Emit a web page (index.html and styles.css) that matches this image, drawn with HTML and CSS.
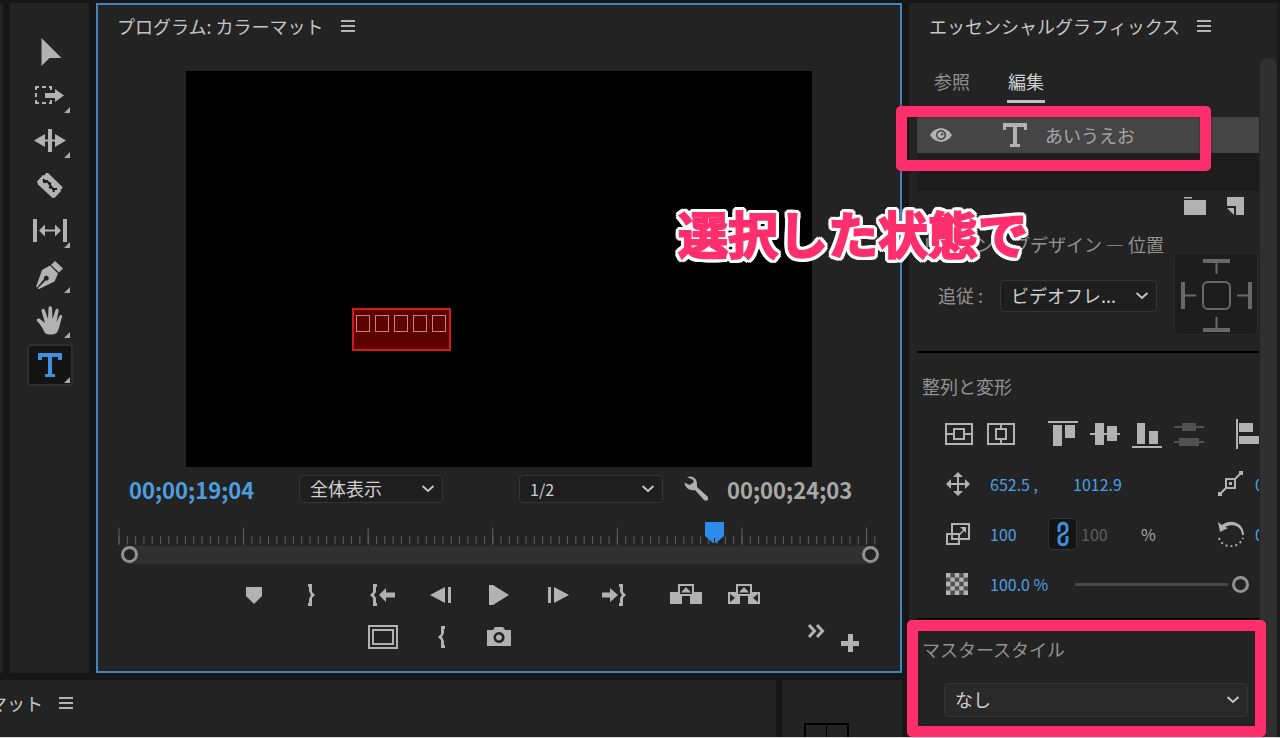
FILE: index.html
```html
<!DOCTYPE html>
<html lang="ja">
<head>
<meta charset="utf-8">
<title>プログラム: カラーマット</title>
<link rel="stylesheet" href="styles.css">
</head>
<body>
<div class="app">
  <div class="main">
    <div class="upper">
      <div class="edge-panel"></div>
      <nav class="tools" aria-label="ツール">
        <button class="tool" aria-label="選択"><svg width="34" height="32" viewBox="0 0 34 32"><path d="M8.500 4v28l8-8H28.500z"/></svg></button>
        <button class="tool has-more" aria-label="トラックの前方選択"><svg width="34" height="32" viewBox="0 0 34 32"><path d="M12 14h10v-4l9 6.500-9 6.500v-4H12z"/><path class="ln2" d="M3 11V8h3M9 8h4M16 8h2v3M3 14v4M3 21v3h3M9 24h4M16 24h2v-3"/></svg></button>
        <button class="tool has-more" aria-label="リップル"><svg width="34" height="32" viewBox="0 0 34 32"><path d="M15 5h4v23h-4zM1 16.500l11-6.500v5.500h3v2h-3V23zM33 16.500L22 10v5.500h-3v2h3V23z"/></svg></button>
        <button class="tool" aria-label="レーザー"><svg width="34" height="32" viewBox="0 0 34 32"><path d="M4 12.500l6-6.500 1.500.500L13 4l2 0L29.500 18l-.5 2-1.500 0 .5 2-6 6.500-2.500.500L5 15.500z"/><path class="slot" d="M10 10l3 4M10 13l4-1 6 8M16 15l2-1M16 18l2 1M20 20l4 0M20 20l1 3"/></svg></button>
        <button class="tool has-more" aria-label="スリップ"><svg width="34" height="32" viewBox="0 0 34 32"><path d="M0 5h4v23H0zM30 5h4v23h-4zM6 16.500l6-6v5h10v-5l6 6-6 6v-5H12v5z"/></svg></button>
        <button class="tool has-more" aria-label="ペン"><svg width="34" height="32" viewBox="0 0 34 32"><path d="M18 6l4-4 8 7.500-4 4zM3 28l6-17 8-4.500 8 8-3.500 8L6 30l-1.500-.500 8-8a2.500 2.500 0 1 0-1.500-1.500L4 28.500z"/></svg></button>
        <button class="tool has-more" aria-label="手のひら"><svg width="34" height="32" viewBox="0 0 34 32"><path d="M12 29C9 23 7 20 4 17c-1-2 1-3 3-2l5 4L8.500 7c0-3 3-3 3.500-.500L15 15l.5-11c.5-2.500 3-2.500 3.500 0l.5 11 3-9c1-2 3.500-1.500 3 1l-2 11 3-6c1-2 3.500-1 2.500 1-2 6-2.500 12-5.500 16-3 2-9 2-11.500 0z"/></svg></button>
        <button class="tool has-more selected" aria-label="横書き文字"><svg width="34" height="32" viewBox="0 0 34 32"><path d="M5 4h24v7h-4V8h-6v17h3v3h-10v-3h3V8H9v3H5z"/></svg></button>
      </nav>
      <section class="program">
        <header class="panel-head"><h1 class="title">プログラム: カラーマット</h1><button class="menu" aria-label="パネルメニュー"></button></header>
        <div class="monitor">
          <div class="text-layer"><i></i><i></i><i></i><i></i><i></i></div>
        </div>
        <div class="monitor-bar">
          <span class="time now">00;00;19;04</span>
          <span class="select fit"><select aria-label="ズーム"><option>全体表示</option></select><svg class="chev" width="14" height="8"><path d="M1.500 1l5.500 5 5.500-5"/></svg></span>
          <span class="select res"><select aria-label="再生時の解像度"><option>1/2</option></select><svg class="chev" width="14" height="8"><path d="M1.500 1l5.500 5 5.500-5"/></svg></span>
          <button class="icon-btn" aria-label="設定"><svg width="26" height="26" viewBox="0 0 26 26"><path d="M4 1c5-2 10 1 10 7v3l10.500 9.500c2 3-1 5.500-3.500 3.500L12 14C7 15 2 12 1.500 6.500l5 2.500 4-2.500V4z"/></svg></button>
          <span class="time total">00;00;24;03</span>
        </div>
        <div class="ruler">
          <svg class="ticks" width="100%" height="18" viewBox="0 0 762 18" preserveAspectRatio="none"><path class="minor" d="M.5 13.500H762"/><path class="major" d="M.5 9H762"/></svg>
          <svg class="playhead" width="19" height="22"><path d="M0 0h19v14l-8 7h-3l-8-7z"/><path class="notch" d="M9 16h1v5H9z"/></svg>
        </div>
        <div class="scrub"><span class="knob"></span><span class="knob"></span></div>
        <div class="transport">
          <div class="row first">
            <div class="group">
              <button aria-label="マーカーを追加"><svg width="32" height="24" viewBox="0 0 32 24"><path d="M8 4h16v9l-8 8-8-8z"/></svg></button>
              <button aria-label="アウトをマーク"><svg width="32" height="24" viewBox="0 0 32 24"><path d="M12 1h4v8l3 3-3 3v8h-4v-3h1v-4l2-4-2-4V4h-1z"/></svg></button>
            </div>
            <div class="group">
              <button aria-label="インへ移動"><svg width="32" height="24" viewBox="0 0 32 24"><path d="M9 1H6v8l-3 3 3 3v8h4v-3H9v-5l-2-3 2-3V4h1V1zM12 12l7-7v4.500h9v5h-9V19z"/></svg></button>
              <button aria-label="1フレーム前へ"><svg width="32" height="24" viewBox="0 0 32 24"><path d="M5 12l15-8v16zM23 4h3v16h-3z"/></svg></button>
              <button aria-label="再生"><svg width="32" height="24" viewBox="0 0 32 24"><path d="M6 2h4l16 10-16 10H6z"/></svg></button>
              <button aria-label="1フレーム先へ"><svg width="32" height="24" viewBox="0 0 32 24"><path d="M7 4h3v16H7zM13 4l15 8-15 8z"/></svg></button>
              <button aria-label="アウトへ移動"><svg width="32" height="24" viewBox="0 0 32 24"><path d="M3 9.500h8V5l8 7-8 7v-4.500H3zM20 1h4v8l3 3-3 3v8h-4v-3h1v-5l2-3-2-3V4h-1z"/></svg></button>
            </div>
            <div class="group">
              <button aria-label="リフト"><svg width="32" height="24" viewBox="0 0 32 24"><path fill-rule="evenodd" d="M0 9h8V1h16v8h8v12H20v-8h-8v8H0zM10 3v8h12V3zM16 4l5 5.500H11z"/></svg></button>
              <button aria-label="抽出"><svg width="32" height="24" viewBox="0 0 32 24"><path fill-rule="evenodd" d="M0 9h8V1h16v8h8v12H20v-8h-8v8H0zM10 3v8h12V3zM16 4l5 5.500H11zM2 11v8l5-4zM30 11v8l-5-4z"/></svg></button>
            </div>
          </div>
          <div class="row second">
            <div class="group">
              <button aria-label="セーフマージン"><svg width="32" height="24" viewBox="0 0 32 24"><path class="ln2" d="M2 1h28v22H2z"/><path class="ln2" d="M6 5h20v14H6z"/></svg></button>
              <button aria-label="インをマーク"><svg width="32" height="24" viewBox="0 0 32 24"><path d="M20 1h-4v8l-3 3 3 3v8h4v-3h-1v-4l-2-4 2-4V4h1z"/></svg></button>
              <button aria-label="フレームを書き出し"><svg width="32" height="24" viewBox="0 0 32 24"><path fill-rule="evenodd" d="M4 5h6l2-3h8l2 3h6v16H4zM16 7a5.500 5.500 0 1 0 .1 0zM16 9.500a3 3 0 1 1-.1 0z"/></svg></button>
            </div>
          </div>
          <div class="extra">
            <button aria-label="その他"><svg width="18" height="14" viewBox="0 0 18 14"><path class="ln3" d="M2 1l5.500 6L2 13M10 1l5.500 6-5.500 6"/></svg></button>
            <button class="add" aria-label="ボタンエディター"><svg width="18" height="18" viewBox="0 0 18 18"><path d="M7 0h5v7h6v5h-6v6H7v-6H0V7h7z"/></svg></button>
          </div>
        </div>
      </section>
    </div>
    <div class="lower">
      <section class="timeline"><h2 class="cut-title">マット</h2><button class="menu" aria-label="パネルメニュー"></button></section>
      <section class="meters"><div class="cells"><i></i><i></i></div></section>
    </div>
  </div>
  <aside class="graphics">
    <div class="content">
      <header class="panel-head"><h2 class="title">エッセンシャルグラフィックス</h2><button class="menu" aria-label="パネルメニュー"></button></header>
      <div class="tabs"><button class="tab">参照</button><button class="tab active">編集</button></div>
      <div class="layers">
        <div class="layer">
          <button class="icon-btn eye" aria-label="表示"><svg width="22" height="16" viewBox="0 0 22 16"><path fill-rule="evenodd" d="M0 8C5-1 17-1 22 8 17 17 5 17 0 8zM11 3a5 5 0 1 0 .1 0zM11 4.500a3.500 3.500 0 1 1-.1 0zM12 6a1.200 1.200 0 1 0 .1 0z"/></svg></button>
          <svg width="24" height="24" viewBox="0 0 24 24"><path d="M0 0h24v7h-3V4h-7v17h3v3H7v-3h3V4H3v3H0z"/></svg>
          <span class="layer-name">あいうえお</span>
        </div>
      </div>
      <div class="layer-actions">
        <button class="icon-btn" aria-label="グループを作成"><svg width="22" height="18" viewBox="0 0 22 18"><path d="M0 0h8v1.500H0zM0 3h22v15H0z"/></svg></button>
        <button class="icon-btn" aria-label="新規レイヤー"><svg width="17" height="18" viewBox="0 0 17 18"><path d="M0 0h17v18H9V9H0zM0 11h7v7z"/></svg></button>
      </div>
      <h3 class="heading responsive">レスポンシブデザイン — 位置</h3>
      <div class="pin-row">
        <label class="pin-label" for="pin">追従 :</label>
        <span class="select pin-select"><select id="pin"><option>ビデオフレ...</option></select><svg class="chev" width="14" height="8"><path d="M1.500 1l5.500 5 5.500-5"/></svg></span>
        <button class="pin-box" aria-label="固定するエッジ"><svg width="80" height="78" viewBox="0 0 80 78"><path class="thick" d="M27 6h27M27 75h27M7 27v27M74 27v27"/><path class="thin" d="M40.500 6v13M40.500 75V62M7 40.500h13M74 40.500H61"/><rect class="sq" x="27" y="27" width="27" height="27" rx="5"/></svg></button>
      </div>
      <div class="rule"></div>
      <h3 class="heading align-head">整列と変形</h3>
      <div class="align-row">
        <div class="align-group">
          <button aria-label="垂直方向中央"><svg width="30" height="30" viewBox="0 0 30 30"><path class="ln2" d="M2 5h26v20H2zM10 10h10v10H10zM2 15h8M20 15h8"/></svg></button>
          <button aria-label="水平方向中央"><svg width="30" height="30" viewBox="0 0 30 30"><path class="ln2" d="M2 5h26v20H2zM10 10h10v10H10zM15 5v5M15 20v5"/></svg></button>
        </div>
        <div class="align-group">
          <button aria-label="上揃え"><svg width="30" height="30" viewBox="0 0 30 30"><path d="M0 2h30v2H0zM5 6h9v21H5zM17 6h10v13H17z"/></svg></button>
          <button aria-label="垂直中央揃え"><svg width="30" height="30" viewBox="0 0 30 30"><path d="M0 14h5V4h9v10h3V7h10v7h3v2h-3v6H17v-6h-3v10H5V16H0z"/></svg></button>
          <button aria-label="下揃え"><svg width="30" height="30" viewBox="0 0 30 30"><path d="M0 27h30v2H0zM5 4h8v21H5zM17 12h9v13h-9z"/></svg></button>
          <button class="off" aria-label="垂直方向に分布" disabled><svg width="30" height="30" viewBox="0 0 30 30"><path d="M0 7h8V4h14v3h8v2h-8v3H8V9H0zM0 22h5v-3h20v3h5v2h-5v3H5v-3H0z"/></svg></button>
        </div>
        <div class="align-group">
          <button aria-label="左揃え"><svg width="30" height="30" viewBox="0 0 30 30"><path d="M0 0h2v30H0zM3 4h14v9H3zM3 17h25v8H3z"/></svg></button>
        </div>
      </div>
      <div class="props">
        <svg width="24" height="24" viewBox="0 0 24 24"><path d="M12 0l5 5h-4v6h6V7l5 5-5 5v-4h-6v6h4l-5 5-5-5h4v-6H5v4l-5-5 5-5v4h6V5H7z"/></svg>
        <input class="num" aria-label="位置 X" value="652.5 ,">
        <input class="num wide" aria-label="位置 Y" value="1012.9">
        <svg class="side" width="26" height="26" viewBox="0 0 26 26"><path d="M0 21h4v4H0zM21 0h4v4h-4zM11 11h3v3h-3z"/><path class="ln2" d="M8 8h9v9H8zM3 22l5-5M17 8l5-5"/></svg>
        <span class="clip">0</span>

        <svg width="24" height="24" viewBox="0 0 24 24"><path class="ln2" d="M6 2h17v15H6zM1 12h12v10H1z"/><path d="M14 5h6v6l-2-2-5 5-1-1 5-5z"/></svg>
        <input class="num" aria-label="スケール" value="100">
        <div class="scale">
          <button class="link" aria-label="縦横比を固定"><svg width="14" height="26" viewBox="0 0 14 26"><path class="chain" d="M3 11V6c0-5 8-5 8 0v3c0 3-4 3-4 5M11 15v5c0 5-8 5-8 0v-3c0-3 4-3 4-5"/></svg></button>
          <input class="num dim" aria-label="スケール (幅)" value="100" disabled>
          <span class="unit">%</span>
        </div>
        <svg class="side" width="26" height="26" viewBox="0 0 26 26"><path d="M0 1l2 10 8-4-3-1C17 1 24 7 24 14h2C26 2 13-3 4 4z"/><path class="dots" d="M1 17c3 10 19 12 24 0"/></svg>
        <span class="clip">0</span>

        <svg width="22" height="22" viewBox="0 0 22 22"><rect class="check-bg" width="22" height="22"/><path d="M0 0h4.400v4.400H0zM8.800 0h4.400v4.400H8.800zM17.600 0H22v4.400h-4.400zM4.400 4.400h4.400v4.400H4.400zM13.200 4.400h4.400v4.400h-4.400zM0 8.800h4.400v4.400H0zM8.800 8.800h4.400v4.400H8.800zM17.600 8.800H22v4.400h-4.400zM4.400 13.200h4.400v4.400H4.400zM13.200 13.200h4.400v4.400h-4.400zM0 17.600h4.400V22H0zM8.800 17.600h4.400V22H8.800zM17.600 17.600H22V22h-4.400z"/></svg>
        <input class="num" aria-label="不透明度" value="100.0 %">
        <input class="slider" type="range" aria-label="不透明度スライダー" min="0" max="100" value="100">
      </div>
      <div class="rule"></div>
      <div class="master">
        <label class="heading" for="style">マスタースタイル</label>
        <span class="select style-select"><select id="style"><option>なし</option></select><svg class="chev" width="14" height="8"><path d="M1.500 1l5.500 5 5.500-5"/></svg></span>
      </div>
    </div>
    <div class="track"><div class="thumb"></div></div>
    <div class="mark mark-layer"></div>
    <div class="mark mark-style"></div>
    <p class="callout">選択した状態で</p>
  </aside>
</div>
</body>
</html>
```
FILE: styles.css
```css
* { box-sizing: border-box; }

body {
  margin: 0;
  background: #161616;
  color: #c6c6c6;
  font: 18px/24px "Noto Sans CJK JP", sans-serif;
}

h1, h2, h3, p { margin: 0; font-size: 18px; font-weight: 400; }

button, input, select { font: inherit; color: inherit; }

button {
  display: flex;
  align-items: center;
  justify-content: center;
  padding: 0;
  border: 0;
  background: none;
}

svg { display: block; flex: none; fill: #b2b2b2; }

.ln2, .ln3 { fill: none; stroke: #b2b2b2; stroke-width: 2; }
.ln3 { stroke-width: 3; }

.app {
  display: flex;
  min-height: 100vh;
  padding-top: 3px;
  border-bottom: 1px solid #d8d8d8;
  overflow: hidden;
}

.main { display: flex; flex: 1; flex-direction: column; gap: 7px; min-width: 0; }
.upper { display: flex; gap: 7px; }
.edge-panel { width: 3px; background: #232323; }

.tools {
  display: flex;
  flex-direction: column;
  align-items: center;
  gap: 3px;
  width: 79px;
  padding-top: 26px;
  background: #232323;
}

.tool {
  position: relative;
  width: 46px;
  height: 42px;
  border: 2px solid transparent;
  border-radius: 4px;
}

.tool.selected { border-color: #2f2f2f; background: #141414; }
.tool.selected svg { fill: #4090e0; }
.slot { fill: none; stroke: #1c1c1c; stroke-width: 2; }

.has-more::after {
  content: "";
  position: absolute;
  right: 1px;
  bottom: 1px;
  border: 3px solid transparent;
  border-right-color: #aaa;
  border-bottom-color: #aaa;
}

.program { flex: 1; min-width: 0; border: 2px solid #4482c2; background: #232323; }

.panel-head { display: flex; align-items: center; gap: 17px; height: 42px; padding: 0 0 1px 19px; }
.title { white-space: nowrap; }

.menu {
  width: 14px;
  height: 12px;
  background: repeating-linear-gradient(#b4b4b4 0 2px, transparent 2px 5px);
}

.monitor {
  position: relative;
  width: 78%;
  aspect-ratio: 626 / 396;
  margin: 24px auto 0;
  background: #000;
}

.text-layer {
  position: absolute;
  left: 26.5%;
  top: 60%;
  display: flex;
  gap: 5px;
  width: 99px;
  height: 43px;
  padding: 5px 2px;
  border: 2px solid #cf1b1b;
  background: #5c0000;
}

.text-layer i { width: 14px; height: 17px; border: 1px solid #cf8080; }

.monitor-bar { display: flex; align-items: center; height: 44px; padding: 0 44px 0 31px; }
.time { width: 129px; font-size: 22px; font-weight: 700; white-space: nowrap; }
.now { color: #4d9ee0; }
.total { color: #a8a8a8; }

.select { position: relative; display: block; height: 28px; }

.select select {
  display: block;
  width: 100%;
  height: 100%;
  padding: 0 10px 2px;
  border: 1px solid #353535;
  border-radius: 4px;
  appearance: none;
  background: #1e1e1e;
  color: #d0d0d0;
}

.chev {
  position: absolute;
  top: 50%;
  right: 8px;
  margin-top: -4px;
  pointer-events: none;
  fill: none;
  stroke: #c4c4c4;
  stroke-width: 2;
}

.fit, .res { width: 144px; }
.fit { margin-left: 41px; }
.res { margin: 0 20px 0 auto; }
.res select { padding-bottom: 0; font-size: 16px; }
.icon-btn { flex: none; }
.total { margin-left: 18px; }

.ruler { position: relative; margin: 16px 22px 0 20px; }
.ticks path { fill: none; stroke: #626262; }
.ticks .minor { stroke-width: 8; stroke-dasharray: 1 7.328; }
.ticks .major { stroke-width: 17; stroke-dasharray: 1 123.920; }
.playhead { position: absolute; top: -5px; left: 77.3%; }
.playhead path { fill: #2d8ceb; }
.playhead .notch { fill: #1b1b1b; }

.scrub {
  display: flex;
  align-items: center;
  justify-content: space-between;
  height: 18px;
  margin: 1px 21px 0 23px;
  border-radius: 9px;
  background: #303030;
}

.knob { width: 17px; height: 17px; border: 3px solid #929292; border-radius: 50%; background: #232323; }

.transport {
  display: grid;
  grid-template-columns: 1fr 530px 1fr;
  grid-template-rows: 42px 42px;
  margin: 10px 0 13px;
}

.row { display: flex; grid-column: 2; gap: 31px; }
.second { padding-left: 129px; }
.group { display: flex; gap: 18px; }
.group button { width: 40px; }
.extra { display: flex; grid-row: 2; grid-column: 3; justify-content: flex-end; padding-right: 33px; }
.extra button { width: 34px; height: 30px; }
.extra .add { align-self: flex-end; }

.lower { display: flex; flex: 1; gap: 6px; min-height: 56px; }

.timeline { display: flex; flex: 1; gap: 16px; align-items: center; padding-bottom: 10px; background: #232323; }
.cut-title { display: flex; justify-content: flex-end; width: 43px; overflow: hidden; white-space: nowrap; }
.meters { display: flex; align-items: flex-end; width: 120px; padding-left: 22px; background: #232323; }
.cells { display: flex; width: 45px; height: 14px; border: 2px solid #000; border-bottom: 0; }
.cells i { flex: 1; }
.cells i + i { border-left: 1px solid #000; }

.graphics {
  position: relative;
  display: flex;
  width: 371px;
  margin-left: 7px;
  border-right: 3px solid #1a1a1a;
  background: #232323;
}

.content { flex: 1; min-width: 0; margin-right: 1px; padding: 2px 0 0 8px; overflow: hidden; }
.content .panel-head { padding-left: 12px; }

.tabs { display: flex; gap: 36px; margin-top: 19px; padding-left: 16px; }
.tab { height: 37px; padding: 0 1px 5px; border-bottom: 3px solid transparent; color: #8f8f8f; }
.tab.active { border-color: #c0c0c0; color: #d0d0d0; }

.layers { height: 74px; margin-top: 14px; background: #1c1c1c; }
.layer { display: flex; align-items: center; height: 36px; padding-left: 13px; background: #454545; }
.layer > svg { margin: 0 18px 0 51px; }
.layer-name { color: #a5a5a5; }

.layer-actions { display: flex; gap: 21px; justify-content: flex-end; margin-top: 6px; padding-right: 15px; }

.heading { padding-left: 5px; color: #929292; line-height: 24px; }
.responsive { margin-top: 17px; white-space: nowrap; }

.pin-row { display: flex; align-items: center; padding-left: 21px; }
.pin-label { width: 62px; padding-bottom: 2px; color: #929292; }
.pin-select { width: 157px; height: 32px; }
.pin-box { width: 84px; height: 82px; margin: -3px 0 0 17px; border: 1px solid #2b2b2b; border-radius: 4px; background: #1d1d1d; }
.pin-box path, .sq { fill: none; stroke: #686868; stroke-width: 2; }
.pin-box .thick { stroke-width: 4; }

.rule { height: 2px; background: #000; }
.pin-row + .rule { margin-top: 16px; }
.align-head { margin-top: 21px; }

.align-row { display: flex; gap: 32px; margin-top: 21px; padding-left: 27px; }
.align-group { display: flex; gap: 12px; }
.off svg { fill: #515151; }

.props {
  display: grid;
  grid-template-columns: 24px 59px 147px 23px 12px;
  grid-template-rows: repeat(3, 50px);
  align-items: center;
  margin: 10px 0 9px;
  padding-left: 29px;
  column-gap: 14px;
  color: #4a9fe4;
  font-size: 16px;
}

.num { width: 66px; height: 24px; padding: 0 0 0 6px; border: 0; background: none; }
.props .num.wide { margin-left: 10px; }
.scale { display: flex; align-items: center; margin-left: -9px; }
.link { width: 29px; height: 32px; border: 1px solid #333; border-radius: 4px; background: #141414; }
.link .chain { fill: none; stroke: #3f8fe0; stroke-width: 3; }
.num.dim { width: 64px; padding-left: 4px; color: #5e5e5e; }
.unit { color: #a8a8a8; }
.clip { color: #4a9fe4; }
.dots { fill: none; stroke: #b2b2b2; stroke-width: 2; stroke-dasharray: 2 3; }
.check-bg { fill: #505050; }

.slider { grid-column: 3 / 6; width: 174px; height: 18px; margin: 0 0 0 18px; appearance: none; background: none; }
.slider::-webkit-slider-runnable-track { height: 3px; background: linear-gradient(#484848, #484848) left / calc(100% - 21px) 100% no-repeat; }
.slider::-webkit-slider-thumb {
  width: 17px;
  height: 17px;
  margin-top: -7px;
  border: 3px solid #929292;
  border-radius: 50%;
  appearance: none;
  background: #232323;
}

.master { padding: 17px 11px 18px 0; }
.master .heading { display: block; }
.style-select { height: 34px; margin: 22px 0 0 27px; }
.style-select select { background: #292929; }

.track { width: 17px; padding-top: 55px; }
.thumb { height: 100%; border-radius: 8px 8px 0 0; background: #303030; }

.mark {
  position: absolute;
  z-index: 1;
  border: 11px solid #ff2f6e;
  border-radius: 5px;
  pointer-events: none;
  box-shadow: 0 0 2px #50112a, inset 0 0 2px #50112a;
}

.mark-layer { top: 103px; left: -13px; width: 315px; height: 65px; }
.mark-style { top: 617px; left: -2px; width: 359px; height: 117px; }

.callout {
  position: absolute;
  z-index: 1;
  top: 199px;
  left: -231px;
  color: #ff2f6e;
  font-size: 50px;
  font-weight: 700;
  line-height: 60px;
  white-space: nowrap;
  -webkit-text-stroke: 2px #ff2f6e;
  text-shadow:
    4px 0 #fff, -4px 0 #fff, 0 4px #fff, 0 -4px #fff,
    3px 3px #fff, -3px 3px #fff, 3px -3px #fff, -3px -3px #fff,
    4px 2px #fff, -4px 2px #fff, 4px -2px #fff, -4px -2px #fff,
    2px 4px #fff, -2px 4px #fff, 2px -4px #fff, -2px -4px #fff;
  pointer-events: none;
}
```
